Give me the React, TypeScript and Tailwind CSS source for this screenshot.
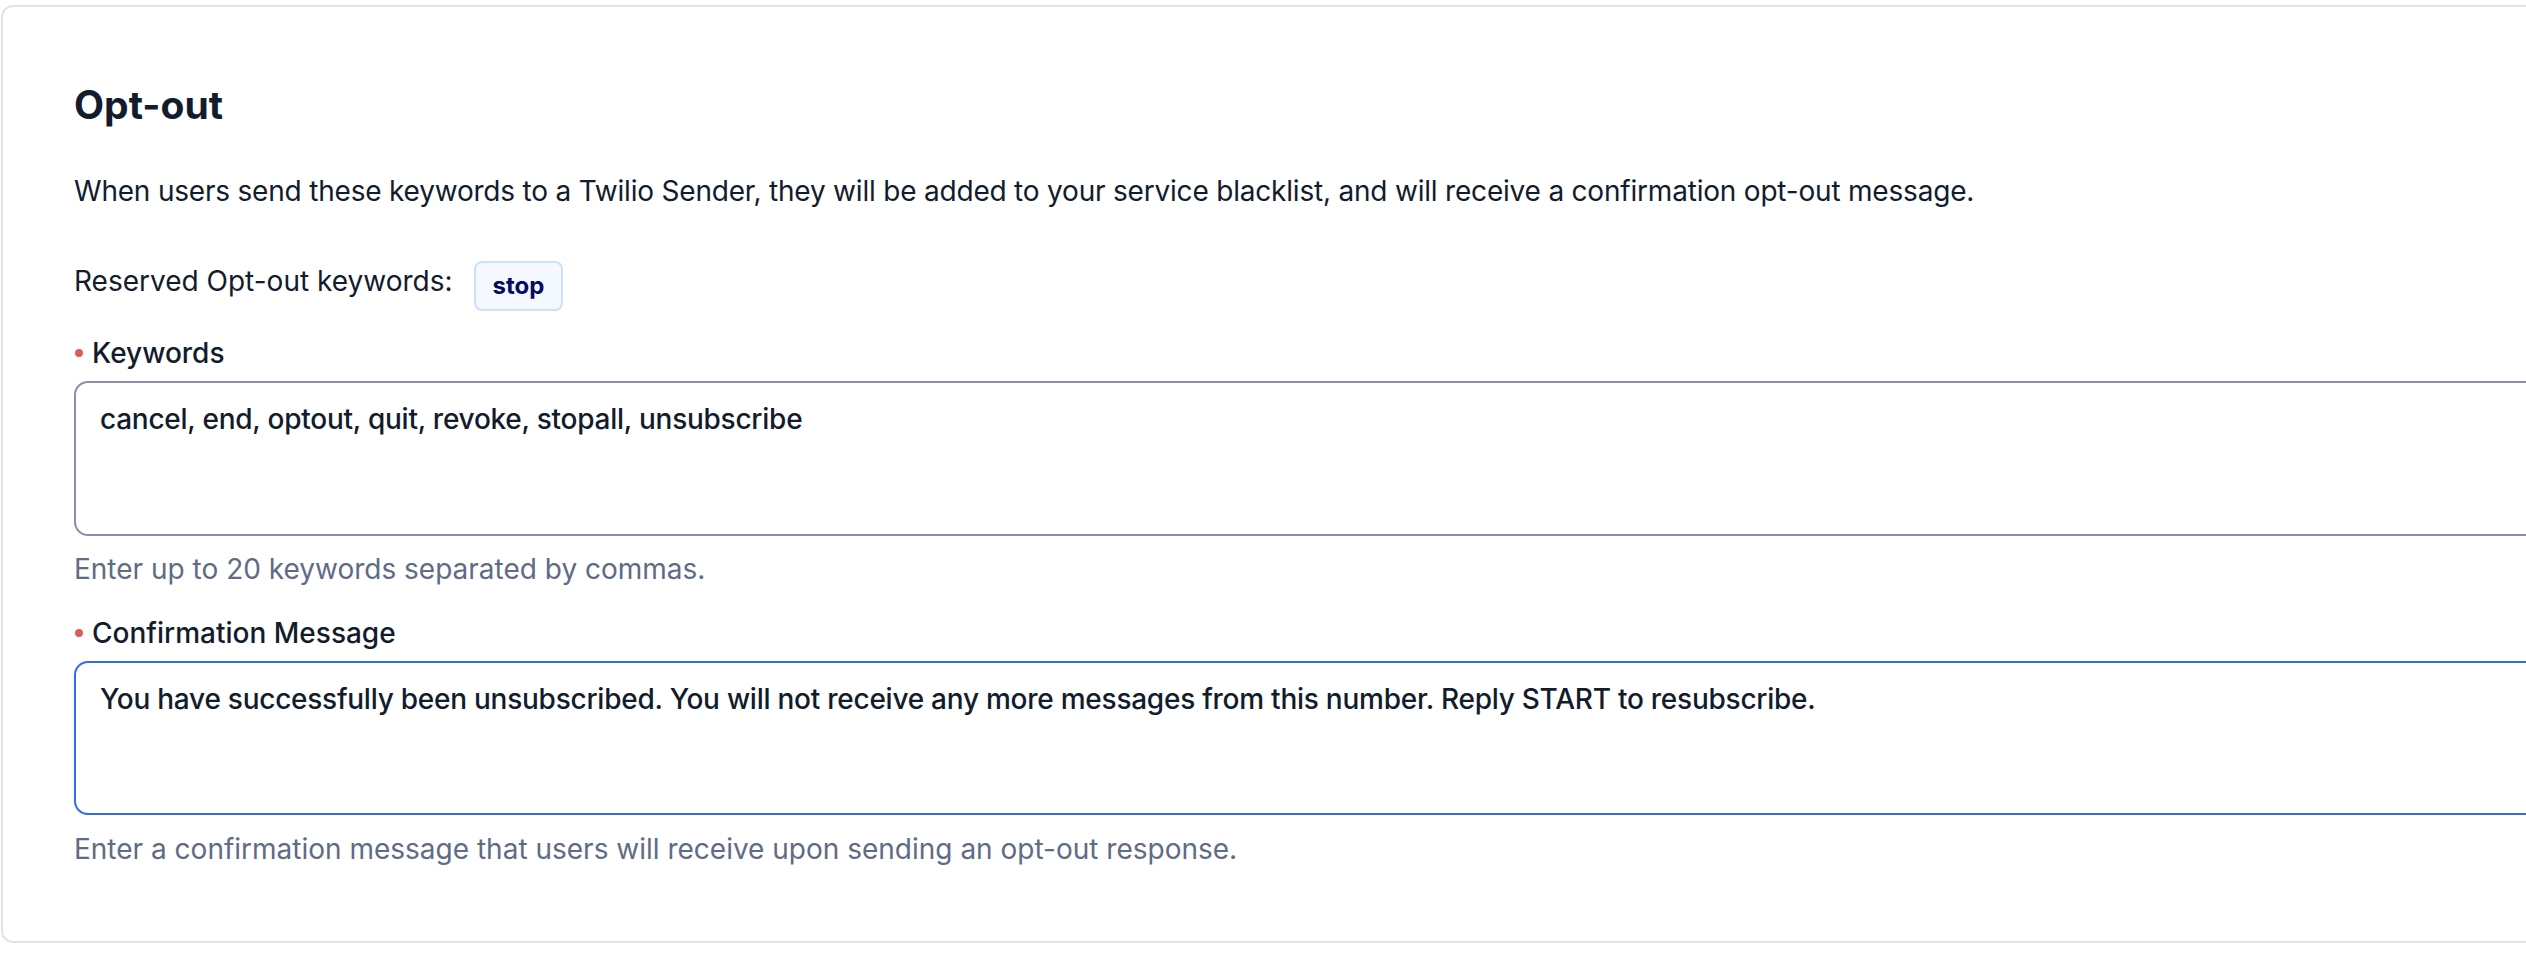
import React from "react";

const font = { fontFamily: "Inter, Lato, 'Noto Sans', sans-serif" };

function RequiredLabel({ children }: { children: React.ReactNode }) {
  return (
    <div className="flex items-center h-[40px] text-[28px] leading-[40px] font-medium text-[#121c2d]">
      <span className="w-[8px] h-[8px] rounded-full bg-[#dd5e58] mr-[9px] ml-[1px]" />
      <span>{children}</span>
    </div>
  );
}

export default function App() {
  return (
    <div className="w-[2526px] h-[958px] overflow-hidden bg-white" style={font}>
      <div className="mt-[5px] ml-[1px] w-[2700px] border-2 border-[#e1e3ea] rounded-[12px] pl-[71px] pt-[70px] pb-[72px] bg-white">
        <h2 className="text-[39px] leading-[56px] font-bold text-[#121c2d]">Opt-out</h2>
        <p className="mt-[38px] text-[28px] leading-[40px] tracking-[-0.2px] text-[#121c2d]">
          When users send these keywords to a Twilio Sender, they will be added to your service blacklist, and will receive a confirmation opt-out message.
        </p>
        <div className="mt-[50px] flex items-start">
          <span className="text-[28px] leading-[40px] text-[#121c2d]">Reserved Opt-out keywords:</span>
          <span className="ml-[21px] h-[50px] px-[17px] flex items-center rounded-[8px] border-2 border-[#cce0fc] bg-[#f4f8ff] text-[24px] font-bold text-[#030b5d]">
            stop
          </span>
        </div>
        <div className="mt-[22px]">
          <RequiredLabel>Keywords</RequiredLabel>
          <textarea
            readOnly
            defaultValue="cancel, end, optout, quit, revoke, stopall, unsubscribe"
            className="mt-[8px] block w-[2560px] h-[155px] resize-none rounded-[14px] border-2 border-[#8891aa] bg-white px-[24px] py-[16px] text-[28px] leading-[40px] tracking-[-0.25px] font-medium text-[#121c2d] outline-none"
          />
          <p className="mt-[13px] text-[28px] leading-[40px] text-[#606b85]">Enter up to 20 keywords separated by commas.</p>
        </div>
        <div className="mt-[24px]">
          <RequiredLabel>Confirmation Message</RequiredLabel>
          <textarea
            readOnly
            defaultValue="You have successfully been unsubscribed. You will not receive any more messages from this number. Reply START to resubscribe."
            className="mt-[8px] block w-[2560px] h-[154px] resize-none rounded-[14px] border-2 border-[#2f6fe6] bg-white px-[24px] py-[16px] text-[28px] leading-[40px] tracking-[-0.25px] font-medium text-[#121c2d] outline-none"
          />
          <p className="mt-[14px] text-[28px] leading-[40px] text-[#606b85]">
            Enter a confirmation message that users will receive upon sending an opt-out response.
          </p>
        </div>
      </div>
    </div>
  );
}
